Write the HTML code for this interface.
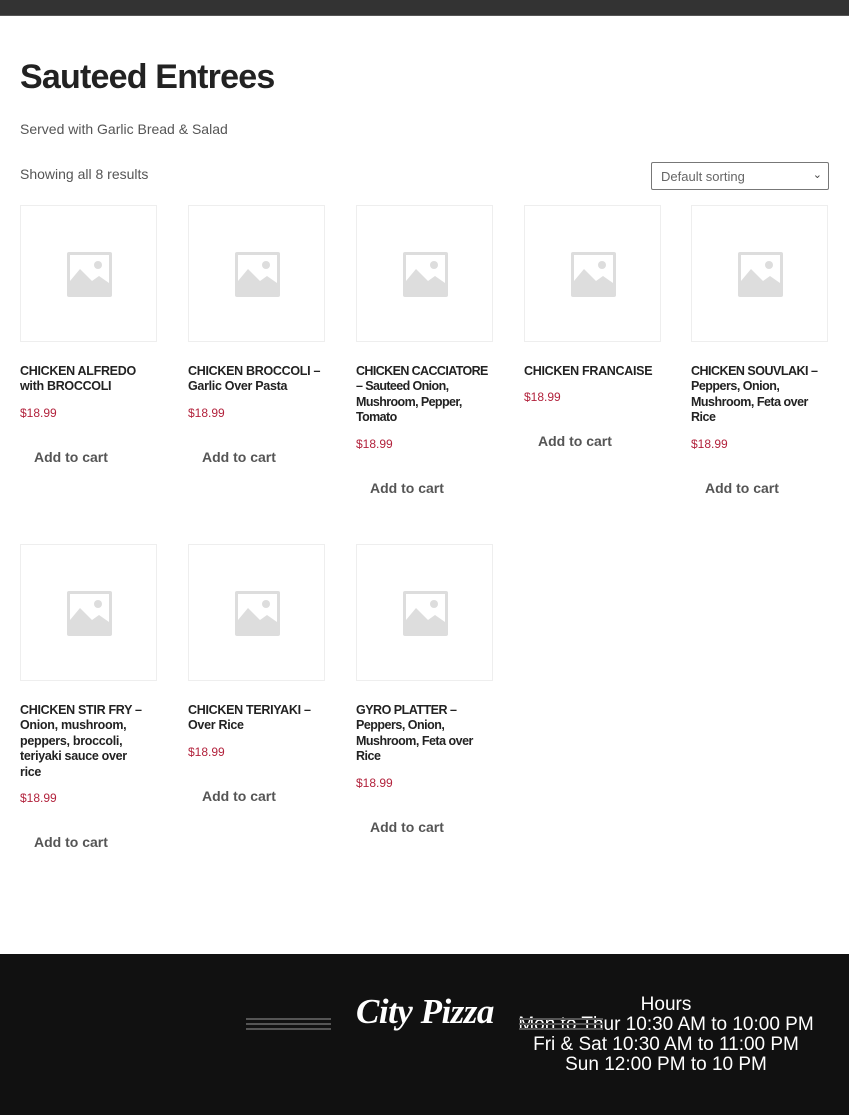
<!DOCTYPE html>
<html><head><meta charset="utf-8"><style>
*{margin:0;padding:0;box-sizing:border-box}
body{width:849px;height:1115px;background:#fff;font-family:"Liberation Sans",sans-serif;position:relative;overflow:hidden}
.top{position:absolute;left:0;top:0;width:849px;height:16px;background:#333;border-bottom:1px solid #555}
h1{position:absolute;left:20px;top:58px;font-size:34px;font-weight:bold;color:#222;letter-spacing:-0.8px}
.sub{position:absolute;left:20px;top:121px;font-size:14px;color:#555}
.show{position:absolute;left:20px;top:166px;font-size:14px;color:#555}
.sel{position:absolute;left:651px;top:162px;width:178px;height:28px;border:1px solid #777;border-radius:2px;font-size:13px;color:#666;padding:6px 9px}
.sel span{position:absolute;right:6px;top:5px;font-size:11px;color:#444}
.card{position:absolute;width:137px}
.img{width:137px;height:137px;border:1px solid #eee;position:relative}
.img svg{position:absolute;left:45px;top:45px}
.t{margin-top:22px;font-size:12.5px;font-weight:bold;color:#222;line-height:15.4px;letter-spacing:-0.3px;white-space:nowrap}
.p{margin-top:11px;font-size:12px;color:#b2223c}
.b{margin-top:29px;margin-left:14px;font-size:14px;font-weight:bold;color:#555}
.foot{position:absolute;left:0;top:954px;width:849px;height:161px;background:#111}
.lines{position:absolute;left:246px;top:1018px;width:85px}
.lines div{height:2px;background:#555;margin-bottom:3px}
.logo{position:absolute;left:356px;top:992px;font-family:"Liberation Serif",serif;font-style:italic;font-weight:bold;font-size:35px;color:#fff;letter-spacing:-0.5px}
.hours{position:absolute;left:503px;top:995px;width:326px;text-align:center;color:#fff;font-size:19px;line-height:20px}
</style></head><body>
<div class="top"></div>
<h1>Sauteed Entrees</h1>
<div class="sub">Served with Garlic Bread &amp; Salad</div>
<div class="show">Showing all 8 results</div>
<div class="sel">Default sorting<span>&#8964;</span></div>

<div class="card" style="left:20px;top:205px"><div class="img"><svg width="47" height="47" viewBox="0 0 47 47"><rect x="1" y="1" width="45" height="45" rx="2" fill="#ddd"/><rect x="4" y="4" width="39" height="39" fill="#fff"/><path d="M4 30 L14 18 L26 30 L33 25 L43 32 L43 43 L4 43Z" fill="#ddd"/><circle cx="32" cy="14" r="4" fill="#ddd"/></svg></div><div class="t">CHICKEN ALFREDO<br>with BROCCOLI</div><div class="p">$18.99</div><div class="b">Add to cart</div></div>
<div class="card" style="left:188px;top:205px"><div class="img"><svg width="47" height="47" viewBox="0 0 47 47"><rect x="1" y="1" width="45" height="45" rx="2" fill="#ddd"/><rect x="4" y="4" width="39" height="39" fill="#fff"/><path d="M4 30 L14 18 L26 30 L33 25 L43 32 L43 43 L4 43Z" fill="#ddd"/><circle cx="32" cy="14" r="4" fill="#ddd"/></svg></div><div class="t">CHICKEN BROCCOLI –<br>Garlic Over Pasta</div><div class="p">$18.99</div><div class="b">Add to cart</div></div>
<div class="card" style="left:356px;top:205px"><div class="img"><svg width="47" height="47" viewBox="0 0 47 47"><rect x="1" y="1" width="45" height="45" rx="2" fill="#ddd"/><rect x="4" y="4" width="39" height="39" fill="#fff"/><path d="M4 30 L14 18 L26 30 L33 25 L43 32 L43 43 L4 43Z" fill="#ddd"/><circle cx="32" cy="14" r="4" fill="#ddd"/></svg></div><div class="t" style="letter-spacing:-0.6px">CHICKEN CACCIATORE<br>– Sauteed Onion,<br>Mushroom, Pepper,<br>Tomato</div><div class="p">$18.99</div><div class="b">Add to cart</div></div>
<div class="card" style="left:524px;top:205px"><div class="img"><svg width="47" height="47" viewBox="0 0 47 47"><rect x="1" y="1" width="45" height="45" rx="2" fill="#ddd"/><rect x="4" y="4" width="39" height="39" fill="#fff"/><path d="M4 30 L14 18 L26 30 L33 25 L43 32 L43 43 L4 43Z" fill="#ddd"/><circle cx="32" cy="14" r="4" fill="#ddd"/></svg></div><div class="t">CHICKEN FRANCAISE</div><div class="p">$18.99</div><div class="b">Add to cart</div></div>
<div class="card" style="left:691px;top:205px"><div class="img"><svg width="47" height="47" viewBox="0 0 47 47"><rect x="1" y="1" width="45" height="45" rx="2" fill="#ddd"/><rect x="4" y="4" width="39" height="39" fill="#fff"/><path d="M4 30 L14 18 L26 30 L33 25 L43 32 L43 43 L4 43Z" fill="#ddd"/><circle cx="32" cy="14" r="4" fill="#ddd"/></svg></div><div class="t" style="letter-spacing:-0.5px">CHICKEN SOUVLAKI –<br>Peppers, Onion,<br>Mushroom, Feta over<br>Rice</div><div class="p">$18.99</div><div class="b">Add to cart</div></div>

<div class="card" style="left:20px;top:544px"><div class="img"><svg width="47" height="47" viewBox="0 0 47 47"><rect x="1" y="1" width="45" height="45" rx="2" fill="#ddd"/><rect x="4" y="4" width="39" height="39" fill="#fff"/><path d="M4 30 L14 18 L26 30 L33 25 L43 32 L43 43 L4 43Z" fill="#ddd"/><circle cx="32" cy="14" r="4" fill="#ddd"/></svg></div><div class="t">CHICKEN STIR FRY –<br>Onion, mushroom,<br>peppers, broccoli,<br>teriyaki sauce over<br>rice</div><div class="p">$18.99</div><div class="b">Add to cart</div></div>
<div class="card" style="left:188px;top:544px"><div class="img"><svg width="47" height="47" viewBox="0 0 47 47"><rect x="1" y="1" width="45" height="45" rx="2" fill="#ddd"/><rect x="4" y="4" width="39" height="39" fill="#fff"/><path d="M4 30 L14 18 L26 30 L33 25 L43 32 L43 43 L4 43Z" fill="#ddd"/><circle cx="32" cy="14" r="4" fill="#ddd"/></svg></div><div class="t">CHICKEN TERIYAKI –<br>Over Rice</div><div class="p">$18.99</div><div class="b">Add to cart</div></div>
<div class="card" style="left:356px;top:544px"><div class="img"><svg width="47" height="47" viewBox="0 0 47 47"><rect x="1" y="1" width="45" height="45" rx="2" fill="#ddd"/><rect x="4" y="4" width="39" height="39" fill="#fff"/><path d="M4 30 L14 18 L26 30 L33 25 L43 32 L43 43 L4 43Z" fill="#ddd"/><circle cx="32" cy="14" r="4" fill="#ddd"/></svg></div><div class="t" style="letter-spacing:-0.5px">GYRO PLATTER –<br>Peppers, Onion,<br>Mushroom, Feta over<br>Rice</div><div class="p">$18.99</div><div class="b">Add to cart</div></div>

<div class="foot"></div>
<div class="lines"><div></div><div></div><div></div></div>
<div class="logo">City Pizza</div>
<div class="hours">Hours<br>Mon to Thur 10:30 AM to 10:00 PM<br>Fri &amp; Sat 10:30 AM to 11:00 PM<br>Sun 12:00 PM to 10 PM</div>
<div class="lines" style="left:519px;top:1018px;width:84px"><div></div><div></div><div></div></div>
</body></html>
